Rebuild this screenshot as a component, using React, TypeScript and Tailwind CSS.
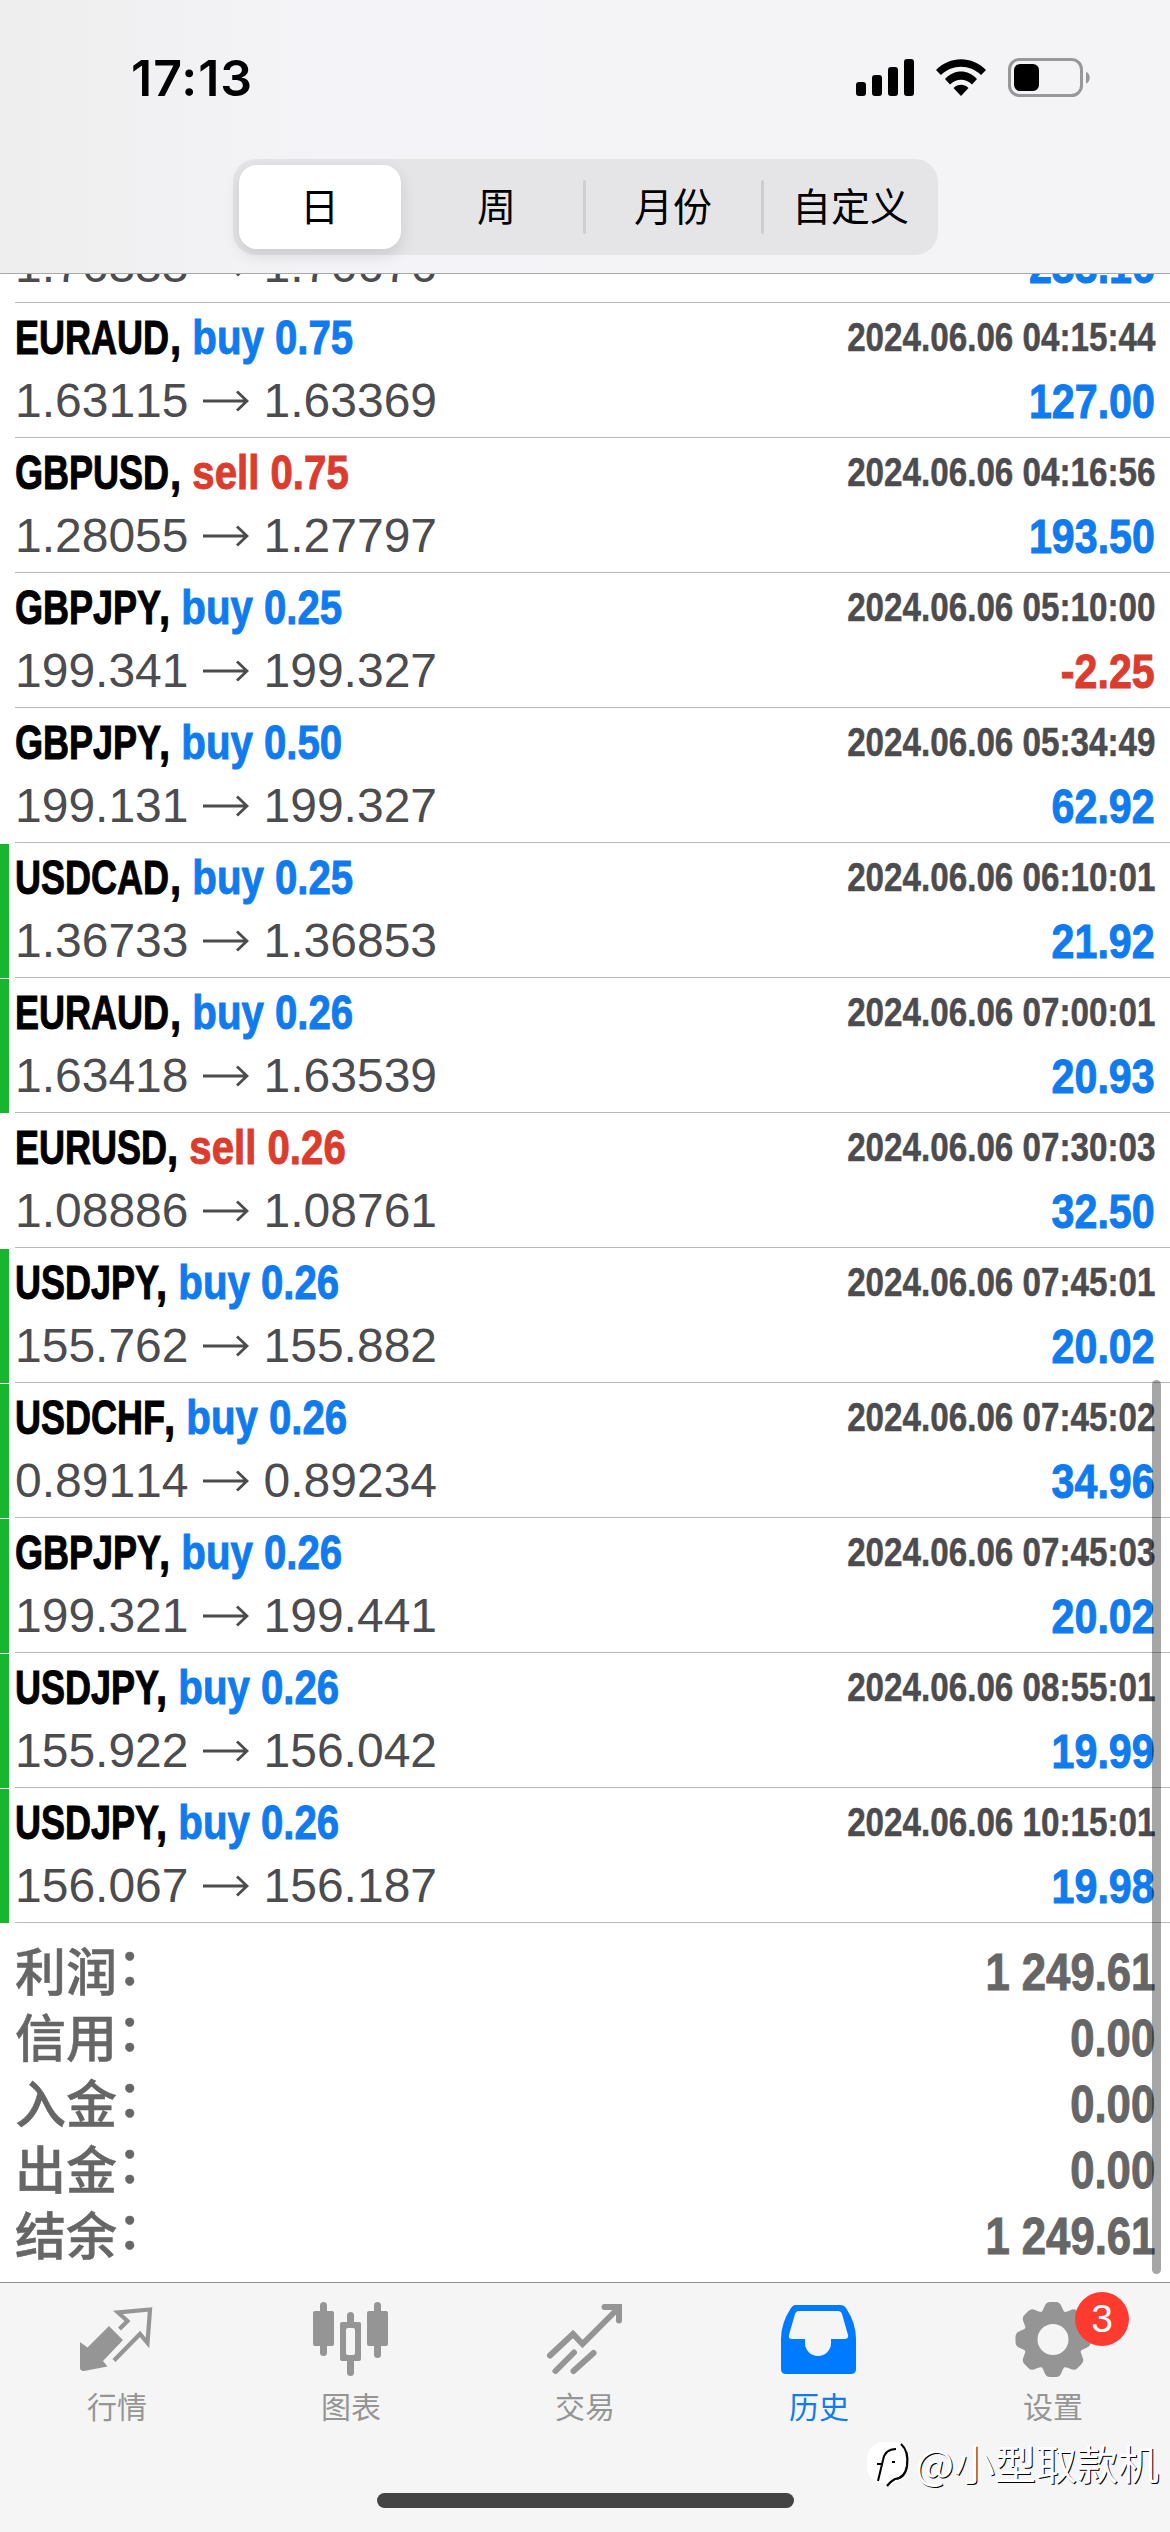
import React from "react";

interface Deal {
  symbol: string;
  side: "buy" | "sell";
  volume: string;
  open: string;
  close: string;
  time: string;
  profit: string;
  tp?: boolean;
}

const deals: Deal[] = [
  { symbol: "EURAUD", side: "buy", volume: "0.75", open: "1.63115", close: "1.63369", time: "2024.06.06 04:15:44", profit: "127.00" },
  { symbol: "GBPUSD", side: "sell", volume: "0.75", open: "1.28055", close: "1.27797", time: "2024.06.06 04:16:56", profit: "193.50" },
  { symbol: "GBPJPY", side: "buy", volume: "0.25", open: "199.341", close: "199.327", time: "2024.06.06 05:10:00", profit: "-2.25" },
  { symbol: "GBPJPY", side: "buy", volume: "0.50", open: "199.131", close: "199.327", time: "2024.06.06 05:34:49", profit: "62.92" },
  { symbol: "USDCAD", side: "buy", volume: "0.25", open: "1.36733", close: "1.36853", time: "2024.06.06 06:10:01", profit: "21.92", tp: true },
  { symbol: "EURAUD", side: "buy", volume: "0.26", open: "1.63418", close: "1.63539", time: "2024.06.06 07:00:01", profit: "20.93", tp: true },
  { symbol: "EURUSD", side: "sell", volume: "0.26", open: "1.08886", close: "1.08761", time: "2024.06.06 07:30:03", profit: "32.50" },
  { symbol: "USDJPY", side: "buy", volume: "0.26", open: "155.762", close: "155.882", time: "2024.06.06 07:45:01", profit: "20.02", tp: true },
  { symbol: "USDCHF", side: "buy", volume: "0.26", open: "0.89114", close: "0.89234", time: "2024.06.06 07:45:02", profit: "34.96", tp: true },
  { symbol: "GBPJPY", side: "buy", volume: "0.26", open: "199.321", close: "199.441", time: "2024.06.06 07:45:03", profit: "20.02", tp: true },
  { symbol: "USDJPY", side: "buy", volume: "0.26", open: "155.922", close: "156.042", time: "2024.06.06 08:55:01", profit: "19.99", tp: true },
  { symbol: "USDJPY", side: "buy", volume: "0.26", open: "156.067", close: "156.187", time: "2024.06.06 10:15:01", profit: "19.98", tp: true },
];

const summary = [
  { label: "利润", value: "1 249.61" },
  { label: "信用", value: "0.00" },
  { label: "入金", value: "0.00" },
  { label: "出金", value: "0.00" },
  { label: "结余", value: "1 249.61" },
];

const periods = [
  { name: "日", className: "mr-2.5 w-[162px] rounded-[18px] bg-white shadow-[0_6px_16px_rgba(0,0,0,0.12)]" },
  { name: "周", className: "w-[172px]" },
  { name: "月份", className: "w-[178px]" },
  { name: "自定义", className: "w-[177px]" },
];

const Arrow = () => (
  <svg width="46" height="22" viewBox="0 0 46 22" fill="none" stroke="#4c4c4f" strokeWidth="2.8">
    <path d="M0 11H44M34 1.5L44 11L34 20.5" />
  </svg>
);

const StatusBar = () => (
  <div className="flex h-[159px] items-start justify-between pt-[58px] pr-[79px] pl-[131px]">
    <span className="font-['Inter'] text-[50px] leading-[40px] font-semibold tracking-[1px] text-black">
      17:13
    </span>
    <div className="flex">
      <svg width="60" height="40" viewBox="0 0 60 40">
        <rect x="1" y="24" width="10" height="14" rx="3" />
        <rect x="17" y="17" width="10" height="21" rx="3" />
        <rect x="33" y="9" width="10" height="29" rx="3" />
        <rect x="49" y="1" width="10" height="37" rx="3" />
      </svg>
      <svg className="ml-[21px]" width="50" height="40" viewBox="0 0 50 40">
        <path d="M0 12C14 -2.5 36 -2.5 50 12L45 17C34 6 16 6 5 17Z" />
        <path d="M9 21C18 11 32 11 41 21L36 26.500C30 20 20 20 14 26.500Z" />
        <path d="M17.500 30C22 25.800 28 25.800 32.500 30L25 38Z" />
      </svg>
      <svg className="ml-[22px]" width="83" height="40" viewBox="0 0 83 40">
        <rect x="1.500" y="1.500" width="72" height="36" rx="10" fill="none" stroke="#98989a" strokeWidth="3" />
        <rect x="6" y="6" width="25" height="27" rx="6" />
        <path d="M78 14C83 15.500 83 24 78 25.500Z" fill="#98989a" />
      </svg>
    </div>
  </div>
);

const PeriodTabs = () => (
  <div className="mx-auto flex h-24 w-[705px] rounded-[23px] bg-[#e5e5e7] py-1.5 pl-1.5 font-['Noto_Sans_CJK_SC',sans-serif] text-[39px] text-black">
    {periods.map((period, i) => (
      <div key={period.name} className={`flex items-center ${period.className}`}>
        {i > 1 && <span className="h-[54px] w-[3px] rounded-full bg-[#cfcfd2]" />}
        <span className="flex-1 pb-1.5 text-center leading-[78px]">{period.name}</span>
      </div>
    ))}
  </div>
);

// Price range on the left, profit on the right
const PriceLine = ({ deal }: { deal: Pick<Deal, "open" | "close" | "profit"> }) => (
  <div className="flex shrink-0 items-center justify-between font-['Liberation_Sans'] text-[#4c4c4f]">
    <span className="flex items-center gap-[14.5px] text-[48px] leading-[58px] [font-kerning:none]">
      {deal.open}
      <Arrow />
      {deal.close}
    </span>
    <span
      className={
        deal.profit.startsWith("-")
          ? "-mt-px origin-right scale-x-[0.84] text-[49px] leading-[58px] font-bold text-[#dc3c2e] [-webkit-text-stroke:1px] [font-kerning:none]"
          : "-mt-px origin-right scale-x-[0.84] text-[49px] leading-[58px] font-bold text-[#0f7bee] [-webkit-text-stroke:1px] [font-kerning:none]"
      }
    >
      {deal.profit}
    </span>
  </div>
);

const DealRow = ({ deal }: { deal: Deal }) => (
  <li className="flex h-[135px]">
    <span className={deal.tp ? "mt-px w-[9px] bg-[#18b62f]" : "w-[9px]"} />
    <div className="ml-1.5 flex-1 border-b border-[#b9b9bb] pr-[15px]">
      <div className="mt-1.5 mb-[7px] flex items-center justify-between font-['Liberation_Sans'] font-bold [font-kerning:none]">
        <div className="flex text-[49px] leading-[56px] text-black [-webkit-text-stroke:1px]">
          <span className="-mr-[55px] origin-left scale-x-[0.735]">{deal.symbol}</span>
          <span className="origin-left scale-x-[0.82] whitespace-pre">
            {", "}
            <span className={deal.side === "buy" ? "text-[#0f7bee]" : "text-[#dc3c2e]"}>
              {deal.side} {deal.volume}
            </span>
          </span>
        </div>
        <span className="origin-right scale-x-[0.83] text-[40px] leading-[56px] text-[#4c4c4f] [-webkit-text-stroke:0.5px]">
          {deal.time}
        </span>
      </div>
      <PriceLine deal={deal} />
    </div>
  </li>
);

const QuotesIcon = () => (
  <svg width="84" height="84" viewBox="0 0 84 84" fill="#959595">
    <path d="M5 40L12.500 45.500L34 24L48 38L28 59L32.500 64.500L9 69Q5 69 5 66Z" />
    <path d="M44.500 27L52.500 19L43 10.500L75 7.500L72.500 41L65 32L39 58.500" fill="none" stroke="#959595" strokeWidth="4.200" />
  </svg>
);

const ChartIcon = () => (
  <svg width="84" height="84" viewBox="0 0 84 84" fill="#959595">
    <rect x="4" y="9" width="21" height="35" rx="2" />
    <rect x="11" y="0" width="7" height="54" rx="3.500" />
    <rect x="58" y="9" width="21" height="35" rx="2" />
    <rect x="65" y="0" width="7" height="56" rx="3.500" />
    <rect x="38" y="10" width="7" height="14" rx="3.500" />
    <rect x="38" y="55" width="7" height="19" rx="3.500" />
    <path fillRule="evenodd" d="M33 20H50Q52 20 52 22V57Q52 59 50 59H33Q31 59 31 57V22Q31 20 33 20ZM37 28V51Q37 53 39 53H44Q46 53 46 51V28Q46 26 44 26H39Q37 26 37 28Z" />
  </svg>
);

const TradeIcon = () => (
  <svg width="84" height="84" viewBox="0 0 84 84" fill="none" stroke="#959595" strokeWidth="6" strokeLinecap="round">
    <path d="M7 53.500L30 32L39.500 42L75.500 6M61.500 5H76V18.500M12.500 69L31 50.500M30.500 69L50.500 51" />
  </svg>
);

const HistoryIcon = () => (
  <svg width="84" height="84" viewBox="0 0 84 84" fill="#007aff">
    <path fillRule="evenodd" d="M18 3H63Q67 3 69 6Q79 21 79 37V67Q79 72 74 72H9Q4 72 4 67V37Q4 21 14 6Q16 3 18 3ZM22 9Q19 9 18 12L12 33Q11 37 15 37H28V41A13 13 0 0 0 54 41V37H67Q72 37 71 33L65 12Q64 9 61 9Z" />
  </svg>
);

const SettingsIcon = () => (
  <svg width="84" height="84" viewBox="0 0 84 84">
    <g fill="#959595" transform="translate(42 37.500)">
      {[0, 45, 90, 135, 180, 225, 270, 315].map((a) => (
        <path key={a} transform={`rotate(${a})`} d="M-14 -25Q-10 -28 -8.500 -33Q-7 -37.500 -3 -37.500H3Q7 -37.500 8.500 -33Q10 -28 14 -25Z" />
      ))}
      <circle r="28.500" />
      <circle r="15.500" fill="#f5f5f5" />
    </g>
  </svg>
);

const tabs = [
  { name: "行情", icon: <QuotesIcon /> },
  { name: "图表", icon: <ChartIcon /> },
  { name: "交易", icon: <TradeIcon /> },
  { name: "历史", icon: <HistoryIcon />, active: true },
  { name: "设置", icon: <SettingsIcon />, badge: 3 },
];

const Watermark = () => (
  <div className="absolute top-[153px] right-[11px] flex items-center text-white">
    <svg width="44" height="52" viewBox="0 0 44 52">
      <rect x="0" y="6" width="40" height="41" rx="16" fill="#fff" />
      <path d="M10 28H16M11 45L16 24Q18 13 29 13M25 26H28" fill="none" stroke="#000" strokeWidth="2" />
      <path d="M34 8Q42 15 40 30Q38 42 28 43Q24 45 20 50" fill="none" stroke="#000" strokeWidth="2.200" />
    </svg>
    <span className="ml-1 font-['Noto_Sans_CJK_SC',sans-serif] text-[41px] leading-[52px] [text-shadow:1px_1px_0.5px_#000]">
      @小型取款机
    </span>
  </div>
);

const TabBar = () => (
  <nav className="relative h-[250px] shrink-0 border-t border-[#8e8e90] bg-[#f5f5f5]">
    <div className="flex pt-[19px]">
      {tabs.map((tab) => (
        <div key={tab.name} className="relative flex flex-1 flex-col items-center">
          {tab.icon}
          <span
            className={
              tab.active
                ? "-mt-px font-['Noto_Sans_CJK_SC',sans-serif] text-[30px] leading-[40px] text-[#0f7bee]"
                : "-mt-px font-['Noto_Sans_CJK_SC',sans-serif] text-[30px] leading-[40px] text-[#959595]"
            }
          >
            {tab.name}
          </span>
          {tab.badge && (
            <span className="absolute -top-2.5 left-[139px] size-[54px] rounded-full bg-[#ff3b30] text-center font-['Liberation_Sans'] text-[39px] leading-[54px] text-white">
              {tab.badge}
            </span>
          )}
        </div>
      ))}
    </div>
    <Watermark />
    <div className="absolute bottom-6 left-[377px] h-[15px] w-[417px] rounded-full bg-[#444]" />
  </nav>
);

export default function App() {
  return (
    <div className="flex h-[2532px] w-[1170px] flex-col overflow-hidden bg-white">
      <header className="h-[274px] shrink-0 border-b border-[#a9a9ab] bg-linear-to-r from-[#eeeeee] via-[#f4f4f8] via-28% to-[#f4f4f6]">
        <StatusBar />
        <PeriodTabs />
      </header>
      <main className="relative flex-1 overflow-hidden">
        {/* Row scrolled under the header, only its price line is still visible */}
        <div className="ml-[15px] flex h-[29px] flex-col justify-end overflow-hidden border-b border-[#b9b9bb] pr-[15px] pb-[7px]">
          <PriceLine deal={{ open: "1.76333", close: "1.76676", profit: "233.16" }} />
        </div>
        <ul>
          {deals.map((deal) => (
            <DealRow key={deal.time} deal={deal} />
          ))}
        </ul>
        <dl className="mt-[17px] pr-[15px] pl-[15px] text-[#666]">
          {summary.map((row) => (
            <div key={row.label} className="flex h-[66px] items-center justify-between">
              <dt className="-mt-2 flex font-['Noto_Sans_CJK_SC',sans-serif] text-[51px] leading-[60px] font-medium [-webkit-text-stroke:0.5px]">
                {row.label}
                <span className="-mt-1.5">：</span>
              </dt>
              <dd className="-mt-0.5 origin-right scale-x-[0.84] font-['Liberation_Sans'] text-[52px] leading-[60px] font-bold [-webkit-text-stroke:1px] [font-kerning:none]">
                {row.value}
              </dd>
            </div>
          ))}
        </dl>
        <div className="absolute right-[9px] bottom-2 h-[894px] w-[9px] rounded-full bg-black/35" />
      </main>
      <TabBar />
    </div>
  );
}
